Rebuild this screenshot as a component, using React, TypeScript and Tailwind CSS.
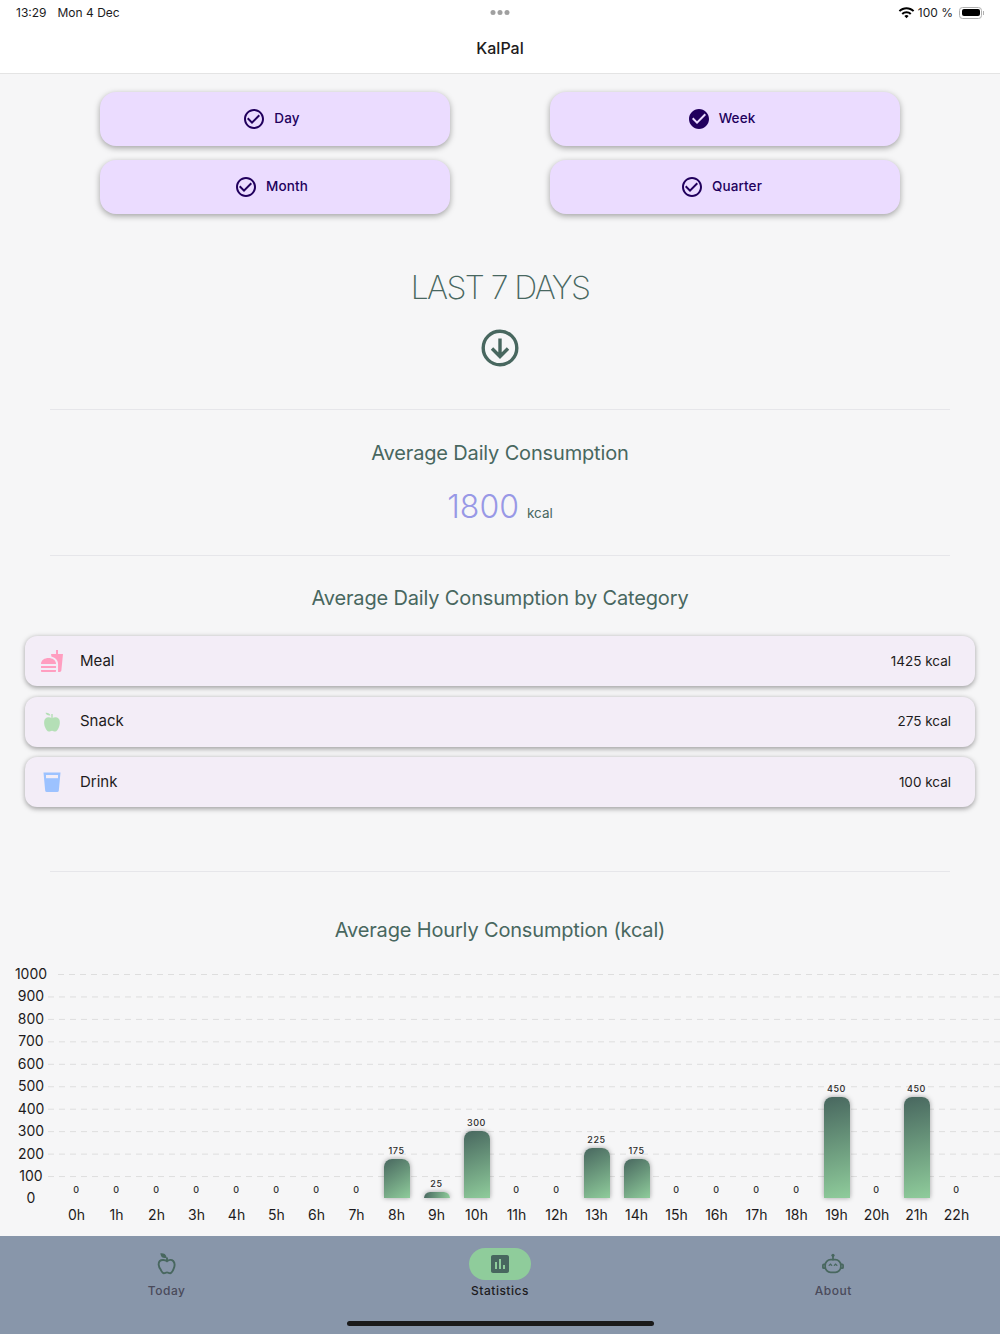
import { MdCheckCircle, MdCheckCircleOutline, MdFastfood, MdInsertChart, MdWifi } from 'react-icons/md'

const ranges = [
  { label: 'Day', selected: false },
  { label: 'Week', selected: true },
  { label: 'Month', selected: false },
  { label: 'Quarter', selected: false },
]

const hourly = [0, 0, 0, 0, 0, 0, 0, 0, 175, 25, 300, 0, 0, 225, 175, 0, 0, 0, 0, 450, 0, 450, 0]
const yTicks = [1000, 900, 800, 700, 600, 500, 400, 300, 200, 100, 0]

function ArrowIcon() {
  return (
    <svg width="38" height="38" viewBox="0 0 38 38" fill="none" stroke="#48675f" strokeWidth="3.400">
      <circle cx="19" cy="19" r="16.800" />
      <path d="M19 9.500v17.500M11 19.500l8 8 8-8" />
    </svg>
  )
}

function SnackIcon() {
  return (
    <svg width="24" height="24" viewBox="0 0 24 24" fill="#b4dfb6">
      <path d="M12 8.400c1.800-1.200 4.800-1.600 6.500 0 2 2 1.500 6.200.3 9-.9 2.100-2 4.100-3.700 4.100-1.300 0-1.900-.8-3.100-.8s-1.800.8-3.100.8c-1.700 0-2.800-2-3.700-4.100-1.200-2.800-1.700-7 .3-9 1.700-1.600 4.700-1.200 6.500 0z" />
      <rect x="11.300" y="4" width="1.400" height="5" />
      <path d="M5.500 2.800c2.300-.3 4.300.5 5 2.600-2.300.4-4.300-.5-5-2.600z" />
    </svg>
  )
}

function DrinkIcon() {
  return (
    <svg width="24" height="24" viewBox="0 0 24 24">
      <path d="M3.500 2.500h17l-1.700 18.200a1.600 1.600 0 0 1-1.600 1.400H6.800a1.600 1.600 0 0 1-1.600-1.400z" fill="#9cc2ff" />
      <rect x="6" y="5" width="12" height="3.200" fill="#f3edf7" />
    </svg>
  )
}

function TodayIcon() {
  return (
    <svg width="24" height="24" viewBox="0 0 24 24" fill="none" stroke="#48675f" strokeWidth="1.900">
      <path d="M12 9.200c1.700-1.300 4.600-1.800 6.200-.2 1.800 1.900 1.400 5.800.2 8.400-.8 1.800-1.800 3.800-3.300 3.800-1.300 0-1.800-.8-3.100-.8s-1.800.8-3.100.8c-1.500 0-2.500-2-3.300-3.800C3.400 14.800 3 10.900 4.800 9c1.600-1.600 5.500-1.100 7.200.2z" />
      <path d="M12 9V5.500" />
      <path d="M6.500 2.300c2 0 3.500.9 4 2.700-2 .2-3.600-.7-4-2.700z" fill="#48675f" />
    </svg>
  )
}

function AboutIcon() {
  return (
    <svg width="24" height="24" viewBox="0 0 26 26" fill="none" stroke="#48675f" strokeWidth="1.900" strokeLinecap="round">
      <circle cx="13" cy="3.600" r="1.700" fill="#48675f" stroke="none" />
      <path d="M13 4.500v3.700" />
      <rect x="4.500" y="8.300" width="17" height="13.700" rx="6" />
      <path d="M4.400 13.500H3a.9.9 0 0 0-.9.9v2.300a.9.9 0 0 0 .9.900h1.400M21.600 13.500H23a.9.9 0 0 1 .9.9v2.300a.9.9 0 0 1-.9.900h-1.400" />
      <path d="M8.800 14.500l1.500-1.300 1.300 1.300M14.400 14.500l1.400-1.300 1.400 1.300" strokeWidth="1.400" />
    </svg>
  )
}

function Divider() {
  return <div className="mx-[50px] h-px bg-[#e6e6ea]" />
}

function SectionTitle({ children }: { children: string }) {
  return <h2 className="text-center text-[20px] leading-7 tracking-[-0.16px] text-[#48675f]">{children}</h2>
}

function CategoryRow({ icon, name, kcal }: { icon: React.ReactNode; name: string; kcal: string }) {
  return (
    <div className="flex h-[50px] items-center rounded-xl bg-[#f3edf7] pl-[15px] pr-6 shadow-[0_1.5px_5px_rgba(0,0,0,0.35)]">
      <div className="flex w-6 justify-center">{icon}</div>
      <span className="ml-4 text-[15px] text-[#1d1b20]">{name}</span>
      <span className="ml-auto text-[13.5px] text-[#1d1b20]">{kcal}</span>
    </div>
  )
}

function HourlyChart() {
  return (
    <div className="mt-[19px] flex">
      <div className="flex h-[252px] w-[47px] shrink-0 flex-col items-center pl-[15px] text-[14px] leading-[22.45px] text-[#1d1b20]">
        {yTicks.map(t => (
          <span key={t} className="h-[22.45px] shrink-0">{t}</span>
        ))}
      </div>
      <div className="relative ml-[1px] flex-1">
        {/* grid lines */}
        <svg className="absolute left-0 top-[11px]" width="952" height="226">
          {yTicks.slice(0, 10).map((t, i) => (
            <line
              key={t}
              x1={i === 0 ? 10 : 0}
              x2="952"
              y1={i * 22.45 + 0.5}
              y2={i * 22.45 + 0.5}
              stroke="#dedede"
              strokeDasharray="6 5"
            />
          ))}
        </svg>
        <div className="relative flex pl-[8.5px]">
          {hourly.map((v, i) => {
            const h = v * 0.2245
            // corner to corner, so the angle depends on the bar's height
            const angle = 180 - (Math.atan(26 / h) * 180) / Math.PI
            return (
              <div key={i} className="flex w-10 shrink-0 flex-col items-center">
                <div className="flex h-[235px] flex-col items-center justify-end">
                  <span className="mb-[2px] text-[9px] font-medium leading-[12px] tracking-[0.6px] text-[#2b2b2b]">{v}</span>
                  {v > 0 && (
                    <div
                      className="w-[26px] rounded-t-lg shadow-[0_0_5px_rgba(0,0,0,0.35)]"
                      style={{ height: h, backgroundImage: `linear-gradient(${angle}deg, #48675f, #8fcc9b)` }}
                    />
                  )}
                </div>
                <span className="mt-[7px] text-sm leading-5 text-[#1d1b20]">{i}h</span>
              </div>
            )
          })}
        </div>
      </div>
    </div>
  )
}

export default function App() {
  return (
    <div className="flex h-[1334px] w-[1000px] flex-col overflow-hidden bg-[#f6f6f7] font-['Inter',sans-serif]">
      {/* Status bar + title */}
      <header className="h-[74px] shrink-0 border-b border-[#e4e4e4] bg-white">
        <div className="relative flex h-[25px] items-center px-4 text-[12px] text-[#1c1c1e]">
          <span>13:29</span>
          <span className="ml-[11px]">Mon 4 Dec</span>
          <div className="absolute left-1/2 flex -translate-x-1/2 gap-[2px]">
            <span className="size-[5px] rounded-full bg-[#a0a0a0]" />
            <span className="size-[5px] rounded-full bg-[#a0a0a0]" />
            <span className="size-[5px] rounded-full bg-[#a0a0a0]" />
          </div>
          <div className="ml-auto flex items-center">
            <MdWifi size={17} className="text-black" />
            <span className="ml-[3px]">100 %</span>
            <div className="ml-[6px] flex items-center">
              <div className="h-[12px] w-[23px] rounded-[3.5px] border border-[#b0b0b0] p-[1.5px]">
                <div className="h-full rounded-[2px] bg-black" />
              </div>
              <div className="ml-[1px] h-[4px] w-[1px] bg-[#b0b0b0]" />
            </div>
          </div>
        </div>
        <h1 className="mt-[11px] text-center text-base font-medium leading-6 text-[#1d1b20]">KalPal</h1>
      </header>

      {/* Range picker */}
      <div className="mx-[100px] mt-[18px] grid grid-cols-2 gap-x-[100px] gap-y-[14px]">
        {ranges.map(r => (
          <button
            key={r.label}
            className="flex h-[54px] items-center justify-center gap-2 rounded-2xl bg-[#ebdcff] pb-[1px] pr-[8px] text-[13.5px] font-medium tracking-[0.1px] text-[#21005d] shadow-[0_2px_6px_rgba(0,0,0,0.35)]"
          >
            {r.selected ? <MdCheckCircle size={24} /> : <MdCheckCircleOutline size={24} />}
            {r.label}
          </button>
        ))}
      </div>

      <div className="mt-[52px] text-center text-[32px] font-extralight leading-[44px] tracking-[-1.6px] text-[#48675f]">
        LAST 7 DAYS
      </div>
      <div className="mt-[19px] flex justify-center">
        <ArrowIcon />
      </div>

      <div className="mt-[42px]">
        <Divider />
      </div>

      <div className="mt-[29px]">
        <SectionTitle>Average Daily Consumption</SectionTitle>
      </div>
      <div className="mt-[18px] flex items-baseline justify-center gap-2">
        <span className="text-[32px] font-light leading-[44px] text-[#9898e6]">1800</span>
        <span className="text-[13.5px] text-[#48675f]">kcal</span>
      </div>

      <div className="mt-[26px]">
        <Divider />
      </div>

      <div className="mt-[28px]">
        <SectionTitle>Average Daily Consumption by Category</SectionTitle>
      </div>

      <div className="mx-[25px] mt-[24px] flex flex-col gap-[10.5px]">
        <CategoryRow icon={<MdFastfood size={26} className="text-[#ff9ec0]" />} name="Meal" kcal="1425 kcal" />
        <CategoryRow icon={<SnackIcon />} name="Snack" kcal="275 kcal" />
        <CategoryRow icon={<DrinkIcon />} name="Drink" kcal="100 kcal" />
      </div>

      <div className="mt-[64px]">
        <Divider />
      </div>

      <div className="mt-[44px]">
        <SectionTitle>Average Hourly Consumption (kcal)</SectionTitle>
      </div>

      <HourlyChart />

      {/* Bottom navigation */}
      <nav className="relative mt-auto h-[98px] shrink-0 bg-[#8896aa]">
        <div className="grid grid-cols-3 pt-3">
          <div className="flex flex-col items-center">
            <div className="flex h-8 items-center justify-center"><TodayIcon /></div>
            <span className="mt-[3px] text-xs font-medium tracking-[0.5px] text-[#4a4a5a]">Today</span>
          </div>
          <div className="flex flex-col items-center">
            <div className="flex h-8 w-[62px] items-center justify-center rounded-full bg-[#8fcc9b]">
              <MdInsertChart size={24} className="text-[#48675f]" />
            </div>
            <span className="mt-[3px] text-xs font-medium tracking-[0.5px] text-[#1d1b20]">Statistics</span>
          </div>
          <div className="flex flex-col items-center">
            <div className="flex h-8 items-center justify-center"><AboutIcon /></div>
            <span className="mt-[3px] text-xs font-medium tracking-[0.5px] text-[#4a4a5a]">About</span>
          </div>
        </div>
        <div className="absolute bottom-[8px] left-[347px] h-[5px] w-[307px] rounded-full bg-[#1a1a1a]" />
      </nav>
    </div>
  )
}
